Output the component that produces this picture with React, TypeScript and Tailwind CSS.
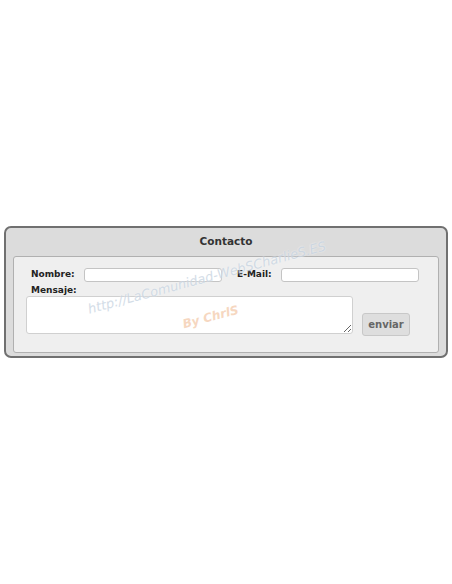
export default function App() {
  return (
    <div className="h-[584px] bg-white flex items-center px-[4px] font-['DejaVu_Sans',Verdana,sans-serif] text-[#222]">
      <div className="relative w-[445px] border-2 border-[#707070] bg-[#dcdcdc] rounded-[7px]">
        <div className="h-[28px] flex items-center justify-center text-[10.5px] font-bold text-[#333]">Contacto</div>
        <div className="mx-[7px] mb-[3px] border border-[#b0b0b0] bg-[#efefef] rounded-[3px] pt-[11px] pl-[12px] pb-[16px]">
          <div className="flex items-center h-[14px]">
            <label className="ml-[5px] w-[53px] text-[9px] font-bold">Nombre:</label>
            <input className="w-[138px] h-[14px] bg-white border border-[#c4c4c4] rounded-[3px] outline-none" />
            <label className="ml-[15px] w-[44px] text-[9px] font-bold">E-Mail:</label>
            <input className="w-[138px] h-[14px] bg-white border border-[#c4c4c4] rounded-[3px] outline-none" />
          </div>
          <div className="ml-[5px] mt-[2px] h-[12px] text-[9px] font-bold leading-[12px]">Mensaje:</div>
          <div className="flex items-start">
            <textarea className="block w-[327px] h-[38px] bg-white border border-[#d0d0d0] rounded-[3px] outline-none" />
            <button className="ml-[9px] mt-[17px] w-[48px] h-[23px] bg-[#dedede] border border-[#c8c8c8] rounded-[3px] text-[10px] font-bold text-[#666]">
              enviar
            </button>
          </div>
        </div>
        <div className="pointer-events-none absolute left-[78px] top-[40px] -rotate-[15deg] text-[13px] italic text-[#c9d5e2] opacity-80 whitespace-nowrap [text-shadow:0_0_2px_#fff]">
          http://LaComunidad-WebSCharlieS.ES
        </div>
        <div className="pointer-events-none absolute left-[176px] top-[80px] -rotate-[15deg] text-[12px] font-bold italic text-[#f3c7a6] opacity-70 whitespace-nowrap">
          By ChrlS
        </div>
      </div>
    </div>
  );
}
